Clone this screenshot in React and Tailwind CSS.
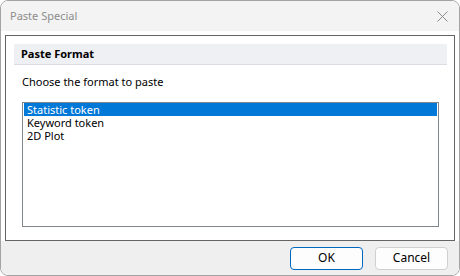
export default function App() {
  const items = ['Statistic token', 'Keyword token', '2D Plot']
  const selected = 0

  return (
    <div className="w-[460px] h-[276px] flex flex-col bg-white border border-[#a3a3a3] rounded-lg overflow-hidden font-['Noto_Sans',sans-serif] text-[11px] text-black">
      {/* title bar */}
      <div className="h-[30px] shrink-0 bg-[#f3f3f3] flex items-center justify-between pl-[9px] pr-[11px]">
        <span className="text-[#8c8c8c] text-[11px]">Paste Special</span>
        <svg width="11" height="11" viewBox="0 0 11 11" className="text-[#8a8a8a]">
          <path d="M0.5 0.5 L10.5 10.5 M10.5 0.5 L0.5 10.5" stroke="currentColor" strokeWidth="1" />
        </svg>
      </div>

      {/* body */}
      <div className="flex-1 flex px-[4px] pt-[4px]">
        <div className="flex-1 flex flex-col border border-[#646464] pt-[8px] pl-[8px] pr-[7px] pb-[13px]">
          <div className="h-[21px] shrink-0 bg-[#eff0f3] border-b border-[#dcdde2] flex items-center pl-[7px] font-bold">
            Paste Format
          </div>
          <div className="pl-[8px] pt-[9px] h-[37px] shrink-0">Choose the format to paste</div>
          <div className="flex-1 mx-[8px] border border-[#82868d] pl-px pr-px">
            {items.map((it, i) => (
              <div
                key={it}
                className={`h-[13px] leading-[13px] pl-[3px] ${i === selected ? 'bg-[#0078d7] text-white' : ''}`}
              >
                {it}
              </div>
            ))}
          </div>
        </div>
      </div>

      {/* footer */}
      <div className="h-[34px] shrink-0 bg-[#efefef] flex items-center justify-end gap-[12px] pr-[11px]">
        <button className="w-[73px] h-[23px] rounded-[4px] bg-[#fdfdfd] border border-[#0067c0] flex items-center justify-center text-[12px]">
          OK
        </button>
        <button className="w-[73px] h-[23px] rounded-[4px] bg-[#fdfdfd] border border-[#d0d0d0] flex items-center justify-center text-[12px]">
          Cancel
        </button>
      </div>
    </div>
  )
}
